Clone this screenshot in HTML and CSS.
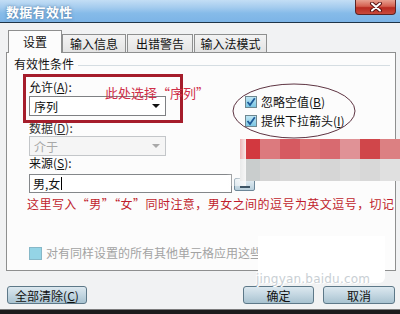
FILE: index.html
```html
<!DOCTYPE html>
<html>
<head>
<meta charset="utf-8">
<link rel="stylesheet" href="styles.css">
</head>
<body>
<div class="dialog">
  <div class="titlebar">
    <span class="title">数据有效性</span>
    <span class="close">
      <svg width="14" height="10" viewBox="0 0 14 10"><path d="M3 1.5 L11 8.5 M11 1.5 L3 8.5" stroke="#5a1414" stroke-width="4" stroke-linecap="round"/><path d="M3 1.5 L11 8.5 M11 1.5 L3 8.5" stroke="#ffffff" stroke-width="2" stroke-linecap="round"/></svg>
    </span>
  </div>
  <div class="tabs">
    <div class="tab active t1">设置</div>
    <div class="tab t2">输入信息</div>
    <div class="tab t3">出错警告</div>
    <div class="tab t4">输入法模式</div>
  </div>
  <div class="panel">
    <div class="group-title"><span>有效性条件</span><span class="rule"></span></div>
    <div class="cond">
      <div class="left">
        <div class="lbl first">允许(<u>A</u>):</div>
        <div class="select sel1"><span>序列</span><span class="arrow"></span></div>
        <div class="lbl second">数据(<u>D</u>):</div>
        <div class="select sel2 disabled"><span>介于</span><span class="arrow"></span></div>
        <div class="lbl third">来源(<u>S</u>):</div>
        <div class="src-row">
          <div class="input">男,女<span class="caret"></span></div>
          <div class="refbtn"><span class="refdots"></span></div>
        </div>
      </div>
      <div class="right">
        <div class="chk"><span class="box"><svg width="10" height="10" viewBox="0 0 10 10"><path d="M1.5 5 L4 8 L8.8 1.2" fill="none" stroke="#1d5a98" stroke-width="1.8"/></svg></span>忽略空值(<u>B</u>)</div>
        <div class="chk second-chk"><span class="box"><svg width="10" height="10" viewBox="0 0 10 10"><path d="M1.5 5 L4 8 L8.8 1.2" fill="none" stroke="#1d5a98" stroke-width="1.8"/></svg></span>提供下拉箭头(<u>I</u>)</div>
      </div>
    </div>
    <div class="note">这里写入“男”“女”同时注意，男女之间的逗号为英文逗号，切记</div>
    <div class="apply"><span class="box dis"></span>对有同样设置的所有其他单元格应用这些</div>
  </div>
  <div class="buttons">
    <div class="btn clear">全部清除(<u>C</u>)</div>
    <div class="spacer"></div>
    <div class="btn ok">确定</div>
    <div class="btn cancel">取消</div>
  </div>
  <div class="bottombar"></div>

  <div class="redbox"></div>
  <div class="anno">此处选择“序列”</div>
  <svg class="ellipse" width="132" height="60" viewBox="0 0 132 60"><ellipse cx="63" cy="29" rx="61" ry="27" fill="none" stroke="#5e3442" stroke-width="1"/></svg>
  <div class="mosaic">
    <div class="mrow red">
      <span style="background:#d2383f"></span><span style="background:#dc7a7e"></span><span style="background:#d65a61"></span><span style="background:#dc7274"></span><span style="background:#d86a70"></span><span style="background:#e09296"></span><span style="background:#d0464a"></span><span style="background:#dc8082"></span>
    </div>
    <div class="mrow gray">
      <span style="background:#c9cdcd"></span><span style="background:#d4d4d4"></span><span style="background:#d8d8d8"></span><span style="background:#d9d9d9"></span><span style="background:#d6d6d6"></span><span style="background:#dcdcdc"></span><span style="background:#d8d8d8"></span><span style="background:#e0e0e0"></span>
    </div>
  </div>
  <div class="blob"></div>
  <div class="watermark">jingyan.baidu.com</div>
</div>
</body>
</html>
```
FILE: styles.css
```css
html, body {
  margin: 0;
  padding: 0;
}
body {
  width: 400px;
  height: 314px;
  overflow: hidden;
  background: #f0f0f0;
  font-family: "Noto Sans CJK SC", "Noto Sans", sans-serif;
  font-size: 12px;
  color: #111;
}
u { text-decoration: underline; text-underline-offset: 1px; }
.dialog {
  position: relative;
  width: 400px;
  height: 314px;
  background: #f1f2f3;
}
.titlebar {
  height: 22px;
  border-bottom: 1px solid #1f3548;
  display: flex;
  align-items: flex-start;
  background: linear-gradient(to bottom, #c3def5 0%, #a3cbee 35%, #86bbe9 60%, #7cb4e6 100%);
}
.title {
  margin-left: 6px;
  line-height: 23px;
  font-size: 13px;
  font-weight: bold;
  color: #fff;
  letter-spacing: 0.3px;
  text-shadow: 0 0 3px rgba(40, 80, 120, 0.7);
}
.close {
  margin-left: auto;
  margin-right: 4px;
  width: 41px;
  height: 15px;
  box-sizing: border-box;
  border: 1px solid #5c2424;
  border-top: none;
  border-radius: 0 0 4px 4px;
  background: linear-gradient(to bottom, #e8a090 0%, #d46050 45%, #b82a20 55%, #c84a3c 100%);
  display: flex;
  align-items: center;
  justify-content: center;
}
.tabs {
  display: flex;
  align-items: flex-end;
  margin-top: 8px;
  height: 21px;
  padding-left: 8px;
  position: relative;
  z-index: 2;
}
.tab {
  box-sizing: border-box;
  height: 18px;
  border: 1px solid #8e8f8f;
  border-bottom: none;
  background: linear-gradient(to bottom, #f3f3f3, #e3e3e3);
  text-align: center;
  line-height: 17px;
  color: #111;
}
.tab.active {
  height: 23px;
  margin-bottom: -1px;
  background: #fcfcfc;
  line-height: 22px;
}
.t1 { width: 54px; }
.t2 { width: 64px; }
.t3 { width: 66px; margin-left: 1px; }
.t4 { width: 73px; margin-left: 1px; }
.panel {
  box-sizing: border-box;
  margin-left: 6px;
  width: 390px;
  height: 219px;
  border: 1px solid #8e8f8f;
  background: #fcfcfc;
  padding: 4px 0 0 7px;
}
.group-title {
  display: flex;
  align-items: center;
  height: 14px;
  line-height: 14px;
}
.rule {
  flex: 1;
  height: 1px;
  background: #d5dde2;
  margin: 2px 5px 0 4px;
}
.cond {
  display: flex;
  margin-top: 9px;
}
.left {
  margin-left: 15px;
  width: 203px;
  flex: none;
  display: flex;
  flex-direction: column;
}
.lbl {
  height: 14px;
  line-height: 14px;
}
.lbl.second { margin-top: 5px; color: #333; }
.select {
  box-sizing: border-box;
  width: 137px;
  height: 20px;
  border: 1px solid #7e8083;
  background: #fff;
  display: flex;
  align-items: center;
  padding-left: 4px;
}
.sel1 { margin-top: 2px; }
.sel2 { margin-top: 1px; border-color: #c3c6c9; background: #f5f5f5; color: #a8a8a8; }
.select .arrow {
  margin-left: auto;
  margin-right: 5px;
  width: 0;
  height: 0;
  border-left: 4px solid transparent;
  border-right: 4px solid transparent;
  border-top: 4px solid #111;
}
.sel2 .arrow { border-top-color: #a8a8a8; }
.src-row {
  margin-top: 4px;
  display: flex;
  align-items: flex-start;
  width: 226px;
}
.input {
  box-sizing: border-box;
  width: 203px;
  flex: none;
  height: 19px;
  border: 1px solid #84878a;
  background: #fff;
  padding-left: 3px;
  line-height: 17px;
  display: flex;
  align-items: center;
}
.caret {
  display: inline-block;
  width: 1px;
  height: 13px;
  background: #000;
  margin-left: 1px;
}
.refbtn {
  box-sizing: border-box;
  flex: none;
  margin-left: 2px;
  margin-top: 4px;
  width: 21px;
  height: 13px;
  border: 1px solid #6d8798;
  border-radius: 2px;
  background: linear-gradient(to bottom, #e6eff4, #b8cfdc);
  display: flex;
  align-items: flex-end;
  justify-content: center;
}
.refdots {
  width: 10px;
  height: 2px;
  margin-bottom: 2px;
  background: #3d5566;
}
.right {
  margin-left: 13px;
  margin-top: 15px;
  display: flex;
  flex-direction: column;
}
.chk {
  display: flex;
  align-items: center;
  height: 14px;
  line-height: 14px;
}
.second-chk { margin-top: 5px; }
.box {
  box-sizing: border-box;
  width: 12px;
  height: 12px;
  border: 1px solid #6e8790;
  background: linear-gradient(to bottom, #bfe6f4, #7cc6e2);
  margin-right: 4px;
  display: flex;
  align-items: center;
  justify-content: center;
}
.note {
  margin-top: 4px;
  padding-left: 13px;
  height: 14px;
  line-height: 14px;
  color: #c01c2c;
  letter-spacing: 0.45px;
  white-space: nowrap;
}
.apply {
  margin-top: 35px;
  padding-left: 15px;
  display: flex;
  align-items: center;
  height: 14px;
  line-height: 14px;
  color: #a3a3a3;
  white-space: nowrap;
}
.box.dis {
  width: 13px;
  height: 13px;
  border-color: #86b8c8;
  background: #94d4e6;
}
.buttons {
  display: flex;
  margin-top: 15px;
  padding: 0 5px 0 7px;
  height: 18px;
}
.btn {
  box-sizing: border-box;
  height: 18px;
  border: 1px solid #5d7888;
  border-radius: 3px;
  background: linear-gradient(to bottom, #dce8ef 0%, #c3d6e1 50%, #a8c2d0 100%);
  text-align: center;
  line-height: 17px;
  color: #111;
}
.clear { width: 80px; }
.spacer { flex: 1; }
.ok { width: 71px; }
.cancel { width: 72px; margin-left: 9px; }
.bottombar {
  margin-top: 5px;
  height: 5px;
  border-top: 1px solid #7c7c7c;
  background: #1c1c1c;
}
.redbox {
  position: absolute;
  left: 23px;
  top: 74px;
  width: 160px;
  height: 49px;
  box-sizing: border-box;
  border: 3px solid #a51d2b;
  z-index: 5;
}
.anno {
  position: absolute;
  left: 105px;
  top: 85px;
  font-size: 13px;
  line-height: 16px;
  color: #cf2e48;
  white-space: nowrap;
  z-index: 6;
}
.ellipse {
  position: absolute;
  left: 231px;
  top: 82px;
  z-index: 6;
}
.mosaic {
  position: absolute;
  left: 240px;
  top: 139px;
  width: 160px;
  z-index: 7;
}
.mosaic::before {
  content: "";
  position: absolute;
  left: -14px;
  top: -5px;
  width: 20px;
  height: 52px;
  background: linear-gradient(to right, rgba(252,252,252,0), rgba(252,252,252,0.9));
}
.mrow {
  display: flex;
  height: 20px;
}
.mrow.gray { height: 22px; }
.mrow span {
  flex: 1;
}
.blob {
  position: absolute;
  left: 258px;
  top: 236px;
  width: 127px;
  height: 47px;
  background: #fff;
  border-radius: 0 0 6px 6px;
  z-index: 4;
}
.watermark {
  position: absolute;
  left: 256px;
  top: 273px;
  font-family: "DejaVu Sans", sans-serif;
  font-size: 12px;
  line-height: 13px;
  color: #c9cfd4;
  text-shadow: 0 0 1px #fff, 1px 1px 0 #fff, -1px -1px 0 #fff;
  letter-spacing: 0.2px;
  z-index: 8;
  white-space: nowrap;
}
```
